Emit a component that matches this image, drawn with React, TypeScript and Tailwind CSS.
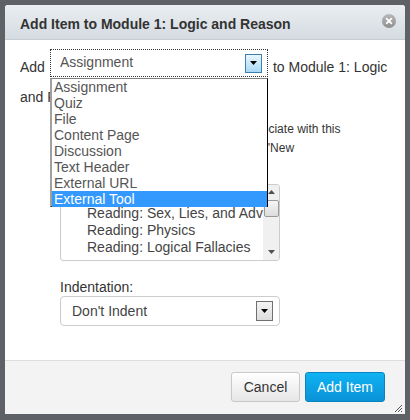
import { ReactNode } from 'react';

const menuItems = [
  'Assignment',
  'Quiz',
  'File',
  'Content Page',
  'Discussion',
  'Text Header',
  'External URL',
  'External Tool',
];

const assignments = [
  'Reading: Sex, Lies, and Advertising',
  'Reading: Physics',
  'Reading: Logical Fallacies',
];

function CloseIcon() {
  return (
    <svg width="14" height="14" viewBox="0 0 14 14">
      <defs>
        <linearGradient id="cl" x1="0" y1="0" x2="0" y2="1">
          <stop offset="0" stopColor="#b9b9b9" />
          <stop offset="1" stopColor="#8e8e8e" />
        </linearGradient>
      </defs>
      <circle cx="7" cy="7" r="7" fill="url(#cl)" />
      <path d="M4.6 4.6 L9.4 9.4 M9.4 4.6 L4.6 9.4" stroke="#fff" strokeWidth="1.8" strokeLinecap="round" />
    </svg>
  );
}

function ArrowBox({ blue }: { blue?: boolean }) {
  return (
    <div
      className={
        blue
          ? 'w-[17px] h-[19px] border border-[#3c7fb1] bg-gradient-to-b from-[#eaf6fd] to-[#a7d9f5] flex items-center justify-center'
          : 'w-[17px] h-[20px] border border-[#707070] bg-gradient-to-b from-[#f4f4f4] to-[#dddddd] flex items-center justify-center'
      }
    >
      <svg width="7" height="4" viewBox="0 0 7 4">
        <path d="M0 0 H7 L3.5 4 Z" fill="#000" />
      </svg>
    </div>
  );
}

function Button({ children, primary }: { children: ReactNode; primary?: boolean }) {
  return (
    <button
      className={
        primary
          ? 'h-[30px] w-[80px] rounded-[3px] border border-[#0a84bf] bg-gradient-to-b from-[#10b3f3] to-[#0a92d6] text-white text-[14px]'
          : 'h-[30px] w-[69px] rounded-[3px] border border-[#c8c8c8] bg-gradient-to-b from-white to-[#e6e6e6] text-[#333] text-[14px]'
      }
    >
      {children}
    </button>
  );
}

export default function App() {
  return (
    <div className="w-[410px] h-[420px] bg-[#5e6267] pt-[5px] pl-[5px] font-['Liberation_Sans',Arial,sans-serif]">
      <div className="w-[400px] h-[409px] flex flex-col bg-white rounded-t-[3px] overflow-hidden">
        {/* title bar */}
        <header className="h-[35px] shrink-0 flex items-center justify-between pl-[15px] pr-[9px] pt-[3px] bg-gradient-to-b from-[#eaeef1] to-[#d4dbe1] border-b border-[#c5ccd3]">
          <h1 className="text-[14px] leading-[16px] font-bold text-[#333]">Add Item to Module 1: Logic and Reason</h1>
          <div className="-mt-[5px]">
            <CloseIcon />
          </div>
        </header>

        {/* body */}
        <div className="flex-1 relative pl-[15px] pt-[9px] text-[14px] leading-[16px] text-[#333]">
          <div className="flex items-start">
            <span className="mt-[10px]">Add</span>
            <div className="ml-[5px] w-[218px] h-[28px] border border-dotted border-[#333] flex items-center justify-between pl-[9px] pr-[5px]">
              <span className="text-[#555] -mt-[3px]">Assignment</span>
              <ArrowBox blue />
            </div>
            <span className="mt-[10px] ml-[5px]">to Module 1: Logic</span>
          </div>
          <div className="mt-[12px]">and Reason</div>

          <p className="mt-[15px] ml-[37px] text-[12px] leading-[19px]">
            Select the assignment you want to associate with this
            <br />
            module, or add a new one by selecting "New
            <br />
            Assignment".
          </p>

          {/* assignment list */}
          <div className="mt-[7px] ml-[40px] w-[220px] h-[77px] border border-[#cccccc] rounded-[3px] flex overflow-hidden">
            <div className="flex-1 pt-[3px] overflow-hidden whitespace-nowrap text-[#444] leading-[17px]">
              <div className="pl-[4px] font-bold">Assignments</div>
              {assignments.map((a) => (
                <div key={a} className="pl-[26px]">
                  {a}
                </div>
              ))}
            </div>
            <div className="w-[16px] bg-[#f0f0f0] flex flex-col items-center">
              <svg width="7" height="4" viewBox="0 0 7 4" className="mt-[5px]">
                <path d="M3.5 0 L7 4 H0 Z" fill="#505050" />
              </svg>
              <div className="mt-[6px] w-[15px] h-[17px] rounded-[2px] border border-[#9a9a9a] bg-gradient-to-b from-[#f6f6f6] to-[#dcdcdc]" />
              <svg width="7" height="4" viewBox="0 0 7 4" className="mt-auto mb-[6px]">
                <path d="M0 0 H7 L3.5 4 Z" fill="#505050" />
              </svg>
            </div>
          </div>

          <div className="mt-[18px] ml-[40px]">Indentation:</div>
          <div className="mt-[1px] ml-[40px] w-[220px] h-[30px] border border-[#cccccc] rounded-[4px] flex items-center justify-between pl-[11px] pr-[6px]">
            <span className="text-[#444]">Don't Indent</span>
            <ArrowBox />
          </div>

          {/* open dropdown menu */}
          <ul className="absolute left-[45px] top-[38px] w-[218px] h-[129px] bg-white border border-black border-l-2 border-l-[#a0a0a0] border-t-[#808080] text-[#555] leading-[16px]">
            {menuItems.map((item) => (
              <li
                key={item}
                className={item === 'External Tool' ? 'pl-[2px] bg-[#3399ff] text-white' : 'pl-[2px]'}
              >
                {item}
              </li>
            ))}
          </ul>
        </div>

        {/* footer */}
        <footer className="relative h-[54px] shrink-0 border-t border-[#dddddd] bg-[#f3f3f3] flex justify-end items-start gap-[5px] pt-[11px] pr-[20px]">
          <Button>Cancel</Button>
          <Button primary>Add Item</Button>
          <svg width="10" height="10" viewBox="0 0 10 10" className="absolute right-[2px] bottom-[1px]">
            <path d="M9 2 L2 9 M9 5 L5 9 M9 8 L8 9" stroke="#555" strokeWidth="1" />
          </svg>
        </footer>
      </div>
    </div>
  );
}
